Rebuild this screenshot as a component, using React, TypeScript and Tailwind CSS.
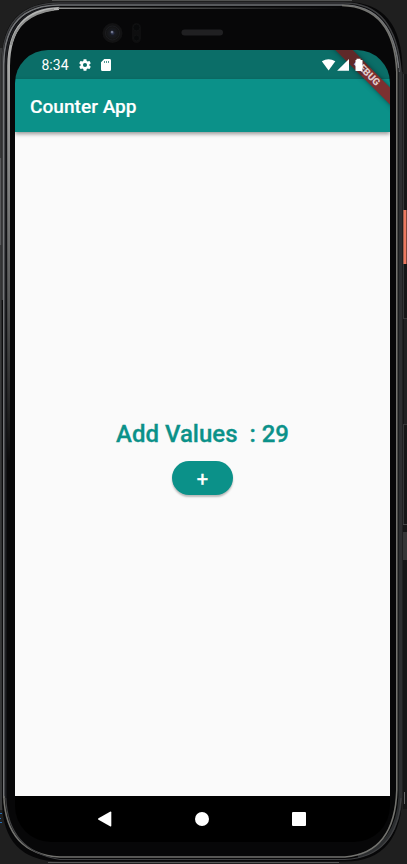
import React from "react";

function DeviceFrame() {
  return (
    <svg className="absolute inset-0" width="407" height="864" viewBox="0 0 407 864" fill="none">
      <defs>
        <linearGradient id="shine" x1="0" y1="20" x2="0" y2="460" gradientUnits="userSpaceOnUse">
          <stop offset="0" stopColor="#b4b5b4" />
          <stop offset="0.3" stopColor="#8a8b8b" />
          <stop offset="0.65" stopColor="#555656" />
          <stop offset="1" stopColor="#0b0b0c" />
        </linearGradient>
        <linearGradient id="topShine" x1="8" y1="0" x2="340" y2="0" gradientUnits="userSpaceOnUse">
          <stop offset="0" stopColor="#b4b5b4" />
          <stop offset="0.16" stopColor="#8c8d8c" />
          <stop offset="0.5" stopColor="#484949" />
          <stop offset="1" stopColor="#09090a" />
        </linearGradient>
        <radialGradient id="lens">
          <stop offset="0" stopColor="#3a4266" />
          <stop offset="0.35" stopColor="#181a22" />
          <stop offset="0.7" stopColor="#17181a" />
          <stop offset="1" stopColor="#101011" />
        </radialGradient>
      </defs>
      <rect width="407" height="864" fill="#1f1f1f" />
      <rect y="48" width="3" height="762" fill="#38393a" />
      <rect x="0" y="158" width="1.500" height="87" fill="#58595b" />
      <path d="M52 0.500H352" stroke="#505150" />
      <rect x="403" y="74" width="4" height="735" fill="#151617" />
      <path d="M1.500 62Q1.500 2 60 2H346Q402 2 402.500 70V792Q402 861.500 345 861.500H60Q2 861 2 800Z" fill="#070708" />
      <path d="M2.200 300V64Q2.200 3 60 3H344Q396 3 401 72" stroke="#3c3d3f" strokeWidth="1.500" />
      <path d="M3.800 798V64Q4.200 5 60 5H342Q394 5 399 72" stroke="#737578" strokeWidth="1.700" />
      <path d="M5.700 798V66Q6 7 60 7" stroke="#1d1e22" strokeWidth="1.700" />
      <path d="M8.600 460V66Q9 10 59 8.500" stroke="url(#shine)" strokeWidth="2.800" />
      <path d="M11 45Q18 15 54 9.500" stroke="#8f908f" strokeWidth="1.800" />
      <path d="M58 8.200H340" stroke="url(#topShine)" strokeWidth="1.600" />
      <path d="M400.500 72V796Q398 846 358 856" stroke="#2c2e30" strokeWidth="4" />
      <path d="M398.300 68V796" stroke="#1b1d1f" />
      <path d="M342 5.500Q394 7 396.800 72V790Q395 853 345 857H60Q6 854 3.800 796" stroke="#73736f" strokeWidth="1.600" />
      <path d="M5.800 798Q8 851 60 859.500H345Q397 857 401 798" stroke="#404143" strokeWidth="1.200" />
      <path d="M48 862.500H339" stroke="#565757" />
      <rect x="403" y="210" width="3.500" height="54" fill="#ef7961" />
      <path d="M403.500 210V264" stroke="#9d604f" />
      <rect x="404" y="318" width="3" height="106" fill="#202122" />
      <path d="M403 318.500H407M403 424.500H407" stroke="#363738" />
      <path d="M403.500 74V210M403.500 264V318M403.500 424V525" stroke="#343637" />
      <path d="M403 524.500H407" stroke="#454647" />
      <rect x="403" y="532" width="4" height="28" fill="#353637" />
      <path d="M404.500 792V804" stroke="#626364" />
      <path d="M0 813.500H2M0 818.500H1M0 822.500H2" stroke="#276db5" />
      <circle cx="112.500" cy="33" r="10" fill="#121213" />
      <circle cx="112.500" cy="33" r="7" fill="url(#lens)" stroke="#1c1d20" />
      <circle cx="112" cy="32" r="1.300" fill="#70768c" />
      <rect x="132" y="23" width="9" height="20" rx="4.500" fill="#0e0e0f" />
      <circle cx="136.500" cy="27.500" r="3.500" fill="#08090a" stroke="#111213" />
      <circle cx="136.500" cy="38" r="3" fill="#08090a" stroke="#111213" />
      <rect x="181.500" y="29.500" width="41.500" height="6" rx="3" fill="#202022" />
    </svg>
  );
}

function StatusBar() {
  return (
    <div className="flex h-[29px] items-center bg-[#0b6e68] pl-[26.500px] text-white">
      <span className="w-[36.500px] pt-px text-[14px] leading-4">8:34</span>
      <svg width="14" height="14" viewBox="0 0 24 24" fill="currentColor">
        <path d="M19.430 12.980c.04-.32.07-.64.07-.98s-.03-.66-.07-.98l2.110-1.650c.19-.15.24-.42.12-.64l-2-3.460c-.12-.22-.39-.3-.61-.22l-2.490 1c-.52-.4-1.080-.73-1.690-.98l-.38-2.650C14.460 2.180 14.250 2 14 2h-4c-.25 0-.46.18-.49.42l-.38 2.650c-.61.25-1.170.59-1.690.98l-2.490-1c-.23-.09-.49 0-.61.22l-2 3.460c-.13.22-.07.49.12.64l2.110 1.650c-.04.32-.07.65-.07.98s.03.66.07.98l-2.110 1.650c-.19.15-.24.42-.12.64l2 3.460c.12.22.39.3.61.22l2.490-1c.52.4 1.080.73 1.690.98l.38 2.650c.03.24.24.42.49.42h4c.25 0 .46-.18.49-.42l.38-2.650c.61-.25 1.170-.59 1.690-.98l2.490 1c.23.09.49 0 .61-.22l2-3.460c.12-.22.07-.49-.12-.64l-2.110-1.650zM12 15.500A3.500 3.500 0 1 1 12 8.500a3.500 3.500 0 0 1 0 7z" />
      </svg>
      <svg className="ml-[8px]" width="12" height="14" viewBox="0 0 12 14" fill="currentColor">
        <path fillRule="evenodd" d="M4.300 1H9.500Q11 1 11 2.400V11.500Q11 13 9.500 13H2.500Q1 13 1 11.500V4.300ZM4.300 3V5H5V3ZM6.300 3V5H7V3ZM8.300 3V5H9V3Z" />
      </svg>
    </div>
  );
}

function Signals() {
  return (
    <svg className="absolute left-[306px] top-[8px]" width="44" height="14" viewBox="0 0 44 14" fill="white">
      <path d="M0.800 3.300Q7.500 -1 14.300 3.300L7.600 12.500Z" />
      <path d="M16.100 12.800L28 1V12.800Z" />
      <path d="M35.500 0.700H39.500V2H41.500V13H34.500V2H35.500Z" />
    </svg>
  );
}

function DebugBanner() {
  return (
    <div className="absolute left-[302px] top-[16.500px] flex h-[12px] w-[100px] rotate-45 items-center justify-center bg-[#7c3030] shadow-[0_0_5px_rgba(0,0,0,0.45)]">
      <div className="absolute inset-y-0 left-0 w-[48px] bg-[#5f2929]" />
      <span className="relative text-[10px] font-black leading-none text-[#e0cccc]">DEBUG</span>
    </div>
  );
}

export default function App() {
  return (
    <div className="relative h-[864px] w-[407px] overflow-hidden bg-[#1f1f1f] pl-[15px] pt-[50px] font-[Roboto,sans-serif]">
      <DeviceFrame />
      <div className="relative flex h-[792px] w-[375px] flex-col overflow-hidden rounded-t-[33px] rounded-b-[36px]">
        <StatusBar />
        <header className="relative z-10 flex h-[53px] items-center bg-[#0b9189] pl-[15px] pt-[2px] shadow-[0_2px_4px_rgba(0,0,0,0.4)]">
          <h1 className="text-[19.100px] font-medium leading-6 text-white [-webkit-text-stroke:0.15px]">Counter App</h1>
        </header>
        <main className="flex flex-1 flex-col items-center bg-[#fafafa] pt-[288px]">
          <p className="whitespace-pre text-[24px] font-medium leading-[28px] text-[#0b9189] [-webkit-text-stroke:0.3px]">{"Add Values  : 29"}</p>
          <button className="mt-[13px] flex h-[34px] w-[61px] items-center justify-center rounded-full bg-[#0b9189] pt-[2px] text-[20px] font-normal text-white shadow-[0_2px_2px_rgba(0,0,0,0.26)] [-webkit-text-stroke:0.4px]">
            +
          </button>
        </main>
        <nav className="flex h-[46px] items-center bg-black">
          <svg className="ml-[82px]" width="16" height="16" viewBox="0 0 16 16" fill="white">
            <path d="M1.500 7.300L13 0.700Q14.300 0.200 14.300 1.300V14.700Q14.300 15.800 13 15.200L1.500 8.700Q0.300 8 1.500 7.300Z" />
          </svg>
          <div className="ml-[82px] h-[14px] w-[14px] rounded-full bg-white" />
          <div className="ml-[83px] h-[14px] w-[14px] rounded-[1px] bg-white" />
        </nav>
        <div className="absolute inset-0 z-20">
          <DebugBanner />
          <Signals />
        </div>
      </div>
    </div>
  );
}
